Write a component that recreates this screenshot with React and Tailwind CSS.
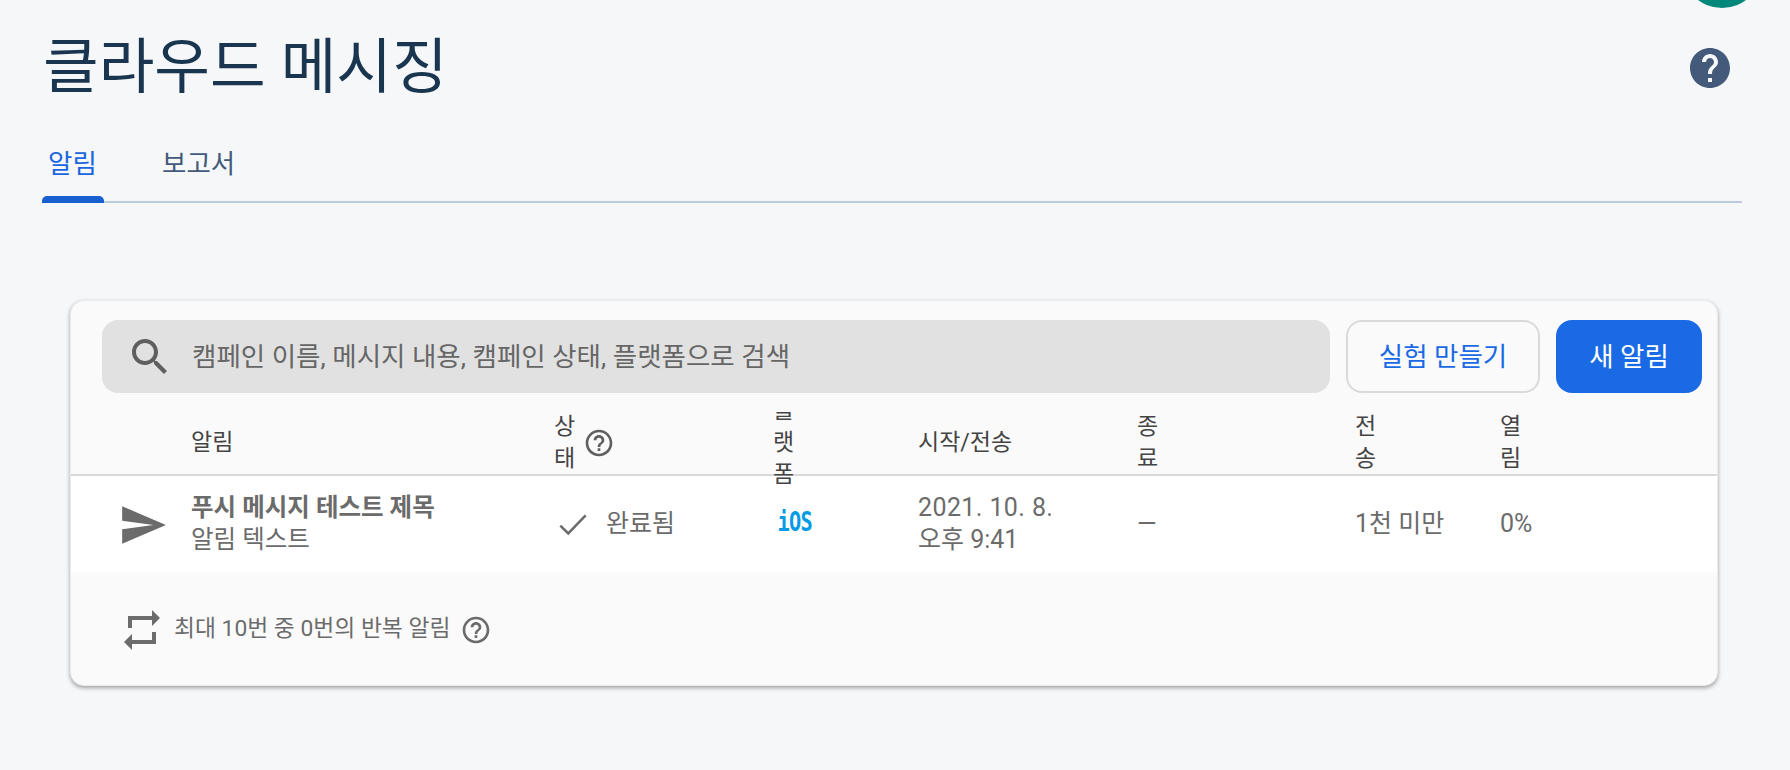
const SEARCH = 'M15.5 14h-.79l-.28-.27C15.41 12.59 16 11.11 16 9.5 16 5.91 13.09 3 9.5 3S3 5.91 3 9.5 5.91 16 9.5 16c1.61 0 3.09-.59 4.23-1.57l.27.28v.79l5 4.99L20.49 19l-4.99-5zm-6 0C7.01 14 5 11.99 5 9.5S7.01 5 9.5 5 14 7.01 14 9.5 11.99 14 9.5 14z';
const HELP_FILLED = 'M12 2C6.48 2 2 6.48 2 12s4.48 10 10 10 10-4.48 10-10S17.52 2 12 2zm1 17h-2v-2h2v2zm2.07-7.75l-.9.92C13.45 12.9 13 13.5 13 15h-2v-.5c0-1.1.45-2.1 1.17-2.83l1.24-1.26c.37-.36.59-.86.59-1.41 0-1.1-.9-2-2-2s-2 .9-2 2H8c0-2.21 1.79-4 4-4s4 1.79 4 4c0 .88-.36 1.68-.93 2.25z';
const HELP_OUTLINE = 'M11 18h2v-2h-2v2zm1-16C6.48 2 2 6.48 2 12s4.48 10 10 10 10-4.48 10-10S17.52 2 12 2zm0 18c-4.41 0-8-3.59-8-8s3.59-8 8-8 8 3.59 8 8-3.59 8-8 8zm0-14c-2.21 0-4 1.79-4 4h2c0-1.1.9-2 2-2s2 .9 2 2c0 2-3 1.75-3 5h2c0-2.25 3-2.5 3-5 0-2.21-1.79-4-4-4z';
const SEND = 'M2.01 21L23 12 2.01 3 2 10l15 2-15 2z';
const REPEAT = 'M7 7h10v3l4-4-4-4v3H5v6h2V7zm10 10H7v-3l-4 4 4 4v-3h12v-6h-2v4z';

function Icon({ d, className }) {
  return (
    <svg viewBox="0 0 24 24" fill="currentColor" className={className}>
      <path d={d} />
    </svg>
  );
}

const COLS = 'grid grid-cols-[120px_363px_219px_145px_219px_218px_145px_1fr]';

function HeadCell({ children }) {
  return <div className="w-min break-all">{children}</div>;
}

export default function App() {
  return (
    <div className="relative h-[770px] overflow-hidden bg-[#f5f7f9] font-['Roboto','Noto_Sans_CJK_KR',sans-serif]">
      {/* avatar cut off by the top of the window */}
      <div className="absolute right-[28px] top-[-72px] h-[80px] w-[80px] rounded-full bg-[#00897b]" />

      <div className="flex items-center justify-between pl-[43px] pr-[56px] pt-[26px]">
        <h1 className="text-[60.5px] leading-[84px] text-[#1a3550]">클라우드 메시징</h1>
        <Icon d={HELP_FILLED} className="h-[48px] w-[48px] text-[#435a7a]" />
      </div>

      <div className="ml-[42px] mr-[48px] mt-[14px] flex h-[79px] border-b-2 border-[#bccbdb]">
        <div className="relative w-[62px] pl-[6px] pt-[24px] text-[26.5px] leading-[32px] text-[#1a66de]">
          알림
          <div className="absolute bottom-[-2px] left-0 h-[7px] w-[62px] rounded-t-[5px] bg-[#185fcf]" />
        </div>
        <div className="ml-[58px] pt-[24px] text-[26.5px] leading-[32px] text-[#435a7a]">보고서</div>
      </div>

      <div className="ml-[70px] mt-[97px] w-[1648px] rounded-[14px] border border-[#e9ebed] bg-[#fafafa] shadow-[0_2px_4px_rgba(0,0,0,0.35)]">
        <div className="flex gap-[16px] pl-[31px] pr-[15px] pt-[19px]">
          <div className="flex h-[73px] flex-1 items-center rounded-[16px] bg-[#e1e1e1] pl-[24px] text-[#5f5f5f]">
            <Icon d={SEARCH} className="h-[48px] w-[48px]" />
            <span className="ml-[18px] text-[26.5px] text-[#666666]">캠페인 이름, 메시지 내용, 캠페인 상태, 플랫폼으로 검색</span>
          </div>
          <button className="h-[73px] w-[194px] rounded-[16px] border-2 border-[#dadada] text-[26.5px] text-[#1a6ae6]">실험 만들기</button>
          <button className="h-[73px] w-[146px] rounded-[16px] bg-[#1a6ae6] text-[26.5px] text-white">새 알림</button>
        </div>

        <div className={`${COLS} relative z-10 mt-[19px] h-[64px] grid-rows-[62px] items-center border-b-2 border-[#d9d9d9] text-[23px] leading-[32px] text-[#444444] [clip-path:inset(0_-20px_-20px_-20px)]`}>
          <div />
          <div>알림</div>
          <div className="flex items-center gap-[8px]">
            <HeadCell>상태</HeadCell>
            <Icon d={HELP_OUTLINE} className="h-[32px] w-[32px] text-[#5f5f5f]" />
          </div>
          <HeadCell>플랫폼</HeadCell>
          <div>시작/전송</div>
          <HeadCell>종료</HeadCell>
          <HeadCell>전송</HeadCell>
          <HeadCell>열림</HeadCell>
        </div>

        <div className={`${COLS} h-[96px] items-center bg-white text-[25px] leading-[32px] text-[#6b6b6b]`}>
          <div className="flex justify-center pl-[23px] pt-[2px]">
            <Icon d={SEND} className="h-[50px] w-[50px]" />
          </div>
          <div>
            <div className="text-[24.5px] font-bold">푸시 메시지 테스트 제목</div>
            <div className="text-[24.5px]">알림 텍스트</div>
          </div>
          <div className="flex items-center gap-[14px]">
            <svg viewBox="0 0 24 24" fill="none" stroke="currentColor" strokeWidth="1.6" className="h-[38px] w-[38px]">
              <path d="M4 13l5 5L20 6.5" />
            </svg>
            <span>완료됨</span>
          </div>
          <div className="origin-left scale-x-75 pb-[6px] pl-[6px] font-['DejaVu_Sans_Mono',monospace] text-[27px] font-bold leading-none tracking-[-1px] text-[#039be5]">iOS</div>
          <div>
            <div className="tracking-[0.4px]">2021. 10. 8.</div>
            <div>오후 9:41</div>
          </div>
          <div>—</div>
          <div>1천 미만</div>
          <div>0%</div>
        </div>

        <div className="flex h-[113px] items-center gap-[8px] pl-[47px] pt-[2px] text-[#6b6b6b]">
          <Icon d={REPEAT} className="h-[48px] w-[48px]" />
          <span className="mr-[2px] text-[22.8px]">최대 10번 중 0번의 반복 알림</span>
          <Icon d={HELP_OUTLINE} className="h-[32px] w-[32px]" />
        </div>
      </div>
    </div>
  );
}
